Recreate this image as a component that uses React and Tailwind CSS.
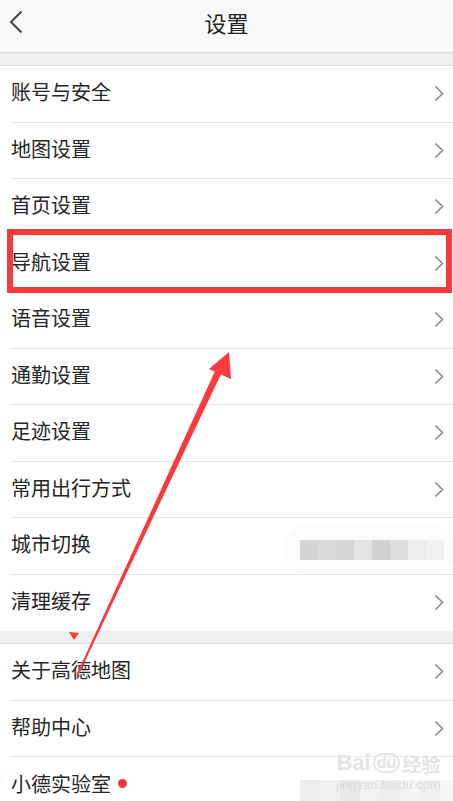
import React from "react";

const groupA = [
  "账号与安全",
  "地图设置",
  "首页设置",
  "导航设置",
  "语音设置",
  "通勤设置",
  "足迹设置",
  "常用出行方式",
  "城市切换",
  "清理缓存",
];

const groupB = ["关于高德地图", "帮助中心"];

const Chevron = () => (
  <svg width="11" height="17" viewBox="0 0 11 17" className="shrink-0">
    <path d="M1.5 1.5 L8.5 8.5 L1.5 15.5" fill="none" stroke="#8a8a8a" strokeWidth="1.6" />
  </svg>
);

const Row = ({ label, arrow = true, last = false, children }) => (
  <div className="h-[56.5px] pl-[11px] bg-white">
    <div
      className={
        "h-full flex items-center justify-between pr-[8px] " +
        (last ? "" : "border-b border-[#e6e6e6]")
      }
    >
      <div className="flex items-center pb-[3px] text-[20px] text-[#262626]">
        {label}
        {children}
      </div>
      {arrow && <Chevron />}
    </div>
  </div>
);

export default function App() {
  return (
    <div
      className="relative w-[453px] h-[801px] overflow-hidden bg-[#efefef]"
      style={{ fontFamily: '"Noto Sans CJK SC", "Noto Sans", sans-serif' }}
    >
      {/* header */}
      <div className="h-[53px] bg-[#f9f9f9] border-b border-[#d6d6d6] flex items-center justify-center pb-[7px] relative">
        <svg width="14" height="24" viewBox="0 0 14 24" className="absolute left-[9px] top-[10px]">
          <path d="M12.5 1.5 L2 12 L12.5 22.5" fill="none" stroke="#444" strokeWidth="2" />
        </svg>
        <span className="text-[22px] text-[#222]">设置</span>
      </div>

      <div className="h-[12px]" />

      <div className="border-t border-[#dedede]">
        {groupA.map((t, i) => (
          <Row key={t} label={t} arrow={t !== "城市切换"} last={i === groupA.length - 1} />
        ))}
      </div>

      <div className="h-[13px] border-b border-[#e0e0e0]" />

      <div>
        {groupB.map((t) => (
          <Row key={t} label={t} />
        ))}
        <Row label="小德实验室" arrow={false} last>
          <span className="ml-[7px] w-[9px] h-[9px] rounded-full bg-[#f5363b]" />
        </Row>
      </div>

      {/* blurred region next to 城市切换 */}
      <div className="absolute left-[284px] top-[526px] w-[170px] h-[48px] rounded-[20px] bg-[#fbfbfb]" />
      <div className="absolute left-[300px] top-[540px] flex h-[20px]">
        {["#d4d4d4", "#d9d9d9", "#d6d6d6", "#e4e4e4", "#d1d1d1", "#dddddd", "#ececec", "#f2f2f2"].map((c, i) => (
          <div key={i} className="w-[18px] h-full" style={{ background: c }} />
        ))}
      </div>

      {/* bottom right pixelation + watermark */}
      <div className="absolute left-[300px] top-[780px] flex h-[21px]">
        {["#ececec", "#f1f1f1", "#e9e9e9", "#f3f3f3", "#eeeeee", "#f5f5f5", "#f0f0f0", "#f7f7f7"].map((c, i) => (
          <div key={i} className="w-[20px] h-full" style={{ background: c }} />
        ))}
      </div>
      <div className="absolute left-[336px] top-[752px] flex flex-col items-center text-[#e4e4e4] leading-none">
        <div className="flex items-center gap-[2px] text-[22px] font-bold" style={{ fontFamily: '"Liberation Sans", sans-serif' }}>
          <span>Bai</span>
          <span className="text-[16px] border-2 border-[#e4e4e4] rounded-full px-[2px]">du</span>
          <span className="text-[19px]" style={{ fontFamily: '"Noto Sans CJK SC", sans-serif' }}>经验</span>
        </div>
        <div className="text-[13px] mt-[4px] text-[#dcdcdc]" style={{ fontFamily: '"Liberation Sans", sans-serif' }}>
          jingyan.baidu.com
        </div>
      </div>

      {/* red highlight box */}
      <div className="absolute left-[7px] top-[229px] w-[445px] h-[64px] border-[6px] border-[#f83a3c]" />

      {/* arrow annotation */}
      <svg className="absolute left-0 top-0" width="453" height="801" viewBox="0 0 453 801">
        <polygon points="76,676 78,676 222,372 216,369" fill="#f83a3c" />
        <polygon points="229,352 209,369 231,379" fill="#f83a3c" />
        <polygon points="69,632 79,633 74,640" fill="#f83a3c" />
      </svg>
    </div>
  );
}
